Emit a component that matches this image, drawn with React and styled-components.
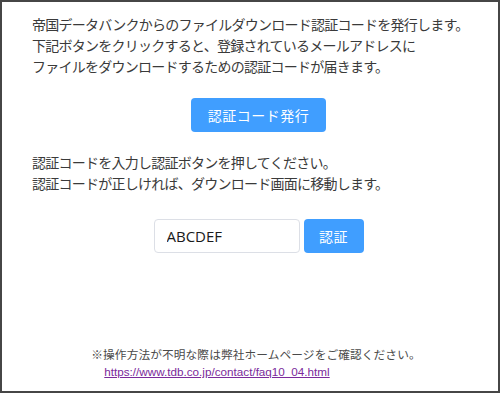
import styled, { createGlobalStyle } from "styled-components";

const GlobalStyle = createGlobalStyle`
  html, body {
    margin: 0;
    padding: 0;
    background: #ffffff;
  }
  * {
    box-sizing: border-box;
  }
`;

const Frame = styled.div`
  width: 500px;
  height: 393px;
  border: 2px solid #464646;
  background: #ffffff;
  display: flex;
  flex-direction: column;
  font-family: "Noto Sans CJK JP", "Noto Sans", sans-serif;
  color: #3a3a3a;
`;

const Message = styled.p`
  margin: ${(p) => p.$top}px 0 0;
  padding: 0 10px 0 30px;
  font-size: 14px;
  line-height: 21px;
  letter-spacing: -0.75px;
  white-space: nowrap;
`;

const Center = styled.div`
  display: flex;
  justify-content: center;
  gap: 4px;
  margin-top: ${(p) => p.$top}px;
  padding-left: 17px;
`;

const PrimaryButton = styled.button`
  width: ${(p) => p.$width}px;
  height: 34px;
  border: none;
  border-radius: 4px;
  background: #409eff;
  color: #ffffff;
  font-family: "Noto Sans CJK JP", sans-serif;
  font-size: 14px;
  letter-spacing: 0.5px;
  padding: 0;
  cursor: pointer;
`;

const CodeInput = styled.input`
  width: 146px;
  height: 34px;
  border: 1px solid #dcdfe6;
  border-radius: 4px;
  padding: 0 12px;
  font-family: "Open Sans", "Noto Sans", sans-serif;
  font-size: 15px;
  color: #1a1a1a;
  outline: none;
`;

const Footer = styled.div`
  margin-top: auto;
  padding: 0 0 10px 12px;
  display: flex;
  justify-content: center;
`;

const FooterBlock = styled.div`
  font-size: 11.7px;
  line-height: 18px;
  color: #4a4a4a;
  letter-spacing: 0.1px;
`;

const HelpLink = styled.a`
  display: block;
  padding-left: 13px;
  font-family: "Liberation Sans", Arial, sans-serif;
  font-size: 11.7px;
  letter-spacing: 0;
  color: #7b2a9b;
  text-decoration: underline;
`;

export default function App() {
  return (
    <>
      <GlobalStyle />
      <Frame>
        <Message $top={12}>
          帝国データバンクからのファイルダウンロード認証コードを発行します。
          <br />
          下記ボタンをクリックすると、登録されているメールアドレスに
          <br />
          ファイルをダウンロードするための認証コードが届きます。
        </Message>
        <Center $top={21}>
          <PrimaryButton $width={135}>認証コード発行</PrimaryButton>
        </Center>
        <Message $top={20}>
          認証コードを入力し認証ボタンを押してください。
          <br />
          認証コードが正しければ、ダウンロード画面に移動します。
        </Message>
        <Center $top={25}>
          <CodeInput defaultValue="ABCDEF" />
          <PrimaryButton $width={60}>認証</PrimaryButton>
        </Center>
        <Footer>
          <FooterBlock>
            ※操作方法が不明な際は弊社ホームページをご確認ください。
            <HelpLink href="#">https://www.tdb.co.jp/contact/faq10_04.html</HelpLink>
          </FooterBlock>
        </Footer>
      </Frame>
    </>
  );
}
